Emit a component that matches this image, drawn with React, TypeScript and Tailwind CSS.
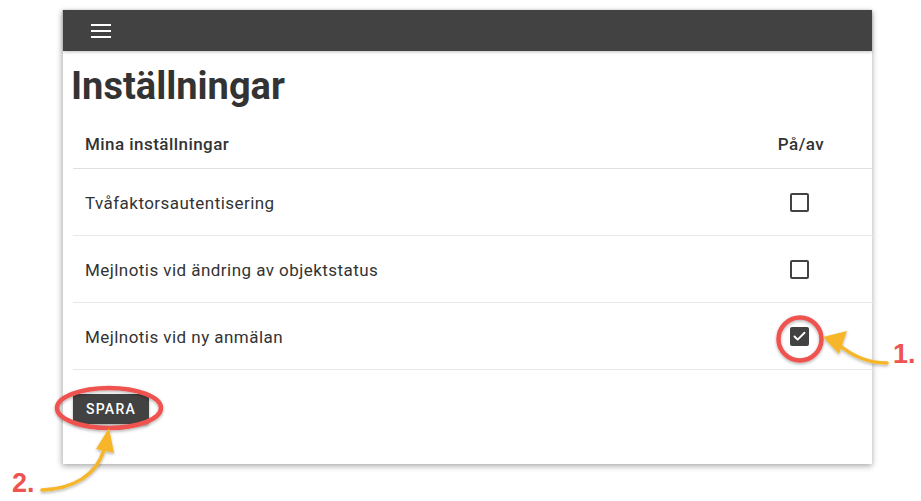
import { Check } from 'lucide-react';

const SETTINGS = [
  { label: 'Tvåfaktorsautentisering', on: false },
  { label: 'Mejlnotis vid ändring av objektstatus', on: false },
  { label: 'Mejlnotis vid ny anmälan', on: true },
];

function Checkbox({ checked }: { checked: boolean }) {
  return checked ? (
    <div className="w-[19px] h-[19px] rounded-[2px] bg-[#424242] flex items-center justify-center">
      <Check className="w-[15px] h-[15px] text-white" strokeWidth={3} />
    </div>
  ) : (
    <div className="w-[19px] h-[19px] rounded-[2px] border-2 border-[#424242]" />
  );
}

// Annotation layer: red circles, yellow arrows and step numbers
function Annotations() {
  return (
    <svg className="absolute inset-0 pointer-events-none" width="921" height="501" viewBox="0 0 921 501">
      <defs>
        <filter id="sh" x="-20%" y="-20%" width="140%" height="140%">
          <feDropShadow dx="0" dy="1.5" stdDeviation="1.5" floodColor="#000" floodOpacity="0.3" />
        </filter>
      </defs>
      <g filter="url(#sh)">
        <circle cx="800" cy="339" r="21.5" fill="none" stroke="#ef5350" strokeWidth="4.5" />
        <ellipse cx="109" cy="408" rx="52" ry="20" fill="none" stroke="#ef5350" strokeWidth="4.5" />
        <path d="M887 363 C868 363 852 356 838 344" fill="none" stroke="#f7b52c" strokeWidth="3.5" strokeLinecap="round" />
        <polygon points="823,337 847,331 839,354" fill="#f7b52c" />
        <path d="M42 490 C72 489 96 476 104 450" fill="none" stroke="#f7b52c" strokeWidth="3.5" strokeLinecap="round" />
        <polygon points="109,428 96,449 114,453" fill="#f7b52c" />
      </g>
    </svg>
  );
}

export default function App() {
  return (
    <div className="relative w-[921px] h-[501px] bg-white overflow-hidden" style={{ fontFamily: 'Roboto, sans-serif' }}>
      <div className="pl-[62px] pt-[10px]">
        <div className="w-[810px] h-[454px] bg-white border-l border-[#d0d0d0] shadow-[0_2px_6px_rgba(0,0,0,0.35)] flex flex-col">
          {/* Top bar */}
          <div className="h-[41px] bg-[#424242] flex items-center pl-[28px] shadow-[0_1px_3px_rgba(0,0,0,0.25)]">
            <div className="flex flex-col gap-[4px] w-[20px]">
              <div className="h-[2px] bg-white" />
              <div className="h-[2px] bg-white" />
              <div className="h-[2px] bg-white" />
            </div>
          </div>

          <div className="pl-[10px]">
            <h1 className="mt-[16px] -ml-[2px] text-[38px] leading-[38px] font-bold text-[#333]">Inställningar</h1>

            <div className="mt-[13px] w-[800px] text-[17px] tracking-[0.45px] text-[#333]">
              <div className="h-[51px] pt-[3px] flex items-center border-b border-[#e0e0e0] font-medium">
                <div className="flex-1 pl-[12px]">Mina inställningar</div>
                <div className="w-[144px] text-center">På/av</div>
              </div>
              {SETTINGS.map((s) => (
                <div key={s.label} className="h-[67px] flex items-center border-b border-[#e8e8e8]">
                  <div className="flex-1 pl-[12px] pt-[3px]">{s.label}</div>
                  <div className="w-[144px] flex justify-center pr-[3px]">
                    <Checkbox checked={s.on} />
                  </div>
                </div>
              ))}
            </div>

            <button className="mt-[24px] h-[30px] w-[76px] rounded-[3px] bg-[#424242] text-white text-[14px] font-medium tracking-[1.25px] shadow-[0_2px_3px_rgba(0,0,0,0.3)]">
              SPARA
            </button>
          </div>
        </div>
      </div>

      <Annotations />
      <div className="absolute left-[893px] top-[334px] text-[27px] font-bold text-[#ef5350]" style={{ fontFamily: '"Liberation Sans", Arial, sans-serif' }}>
        1.
      </div>
      <div className="absolute left-[12px] top-[463px] text-[27px] font-bold text-[#ef5350]" style={{ fontFamily: '"Liberation Sans", Arial, sans-serif' }}>
        2.
      </div>
    </div>
  );
}
